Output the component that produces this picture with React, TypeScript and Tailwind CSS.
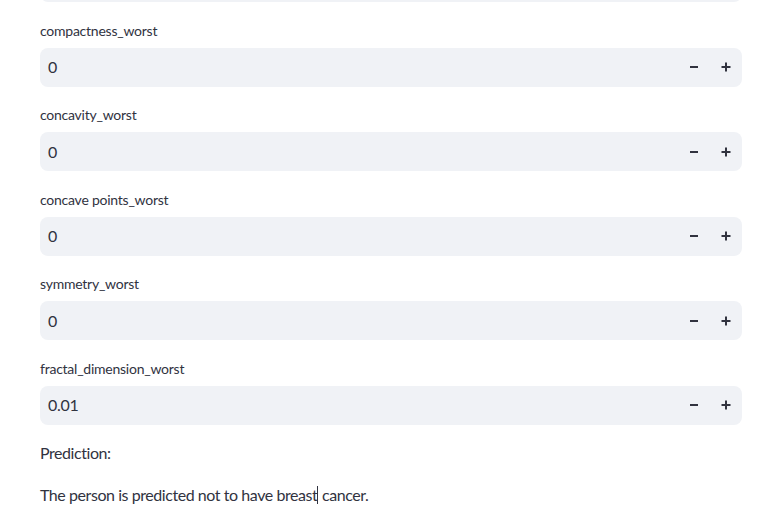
import React from 'react';

const fields = [
  { label: 'compactness_worst', value: '0' },
  { label: 'concavity_worst', value: '0' },
  { label: 'concave points_worst', value: '0' },
  { label: 'symmetry_worst', value: '0' },
  { label: 'fractal_dimension_worst', value: '0.01' },
];

function Minus() {
  return (
    <svg width="10" height="10" viewBox="0 0 10 10">
      <rect x="1" y="4" width="8" height="2" fill="#31333f" />
    </svg>
  );
}

function Plus() {
  return (
    <svg width="10" height="10" viewBox="0 0 10 10">
      <rect x="0.5" y="4" width="9" height="2" fill="#31333f" />
      <rect x="4" y="0.5" width="2" height="9" fill="#31333f" />
    </svg>
  );
}

function NumberBox({ value }: { value: string }) {
  return (
    <div className="flex h-[39px] items-center rounded-lg bg-[#f0f2f6] pl-2">
      <span className="flex-1 text-base tracking-[-0.3px] text-[#31333f]">{value}</span>
      <div className="flex items-center">
        <button className="flex h-10 w-8 items-center justify-center">
          <Minus />
        </button>
        <button className="flex h-10 w-8 items-center justify-center">
          <Plus />
        </button>
      </div>
    </div>
  );
}

export default function App() {
  return (
    <main
      className="h-[529px] w-[773px] overflow-hidden bg-white text-[#31333f]"
      style={{ fontFamily: 'Lato, "Liberation Sans", sans-serif' }}
    >
      <div className="ml-10 flex w-[702px] flex-col gap-[16.5px]">
        {/* tail of the previous input */}
        <div className="-mt-[37px] h-[39px] rounded-lg bg-[#f0f2f6]" />

        {fields.map(f => (
          <div key={f.label} className="flex flex-col">
            <label className="mb-[5px] flex h-6 items-center text-sm tracking-[-0.24px]">{f.label}</label>
            <NumberBox value={f.value} />
          </div>
        ))}

        <div className="flex flex-col tracking-[-0.44px]">
          <p className="text-base">Prediction:</p>
          <p className="mt-[18px] text-base">
            The person is predicted not to have breast
            <span className="inline-block h-[18px] w-px translate-y-[3px] bg-[#31333f]" /> cancer.
          </p>
        </div>
      </div>
    </main>
  );
}
